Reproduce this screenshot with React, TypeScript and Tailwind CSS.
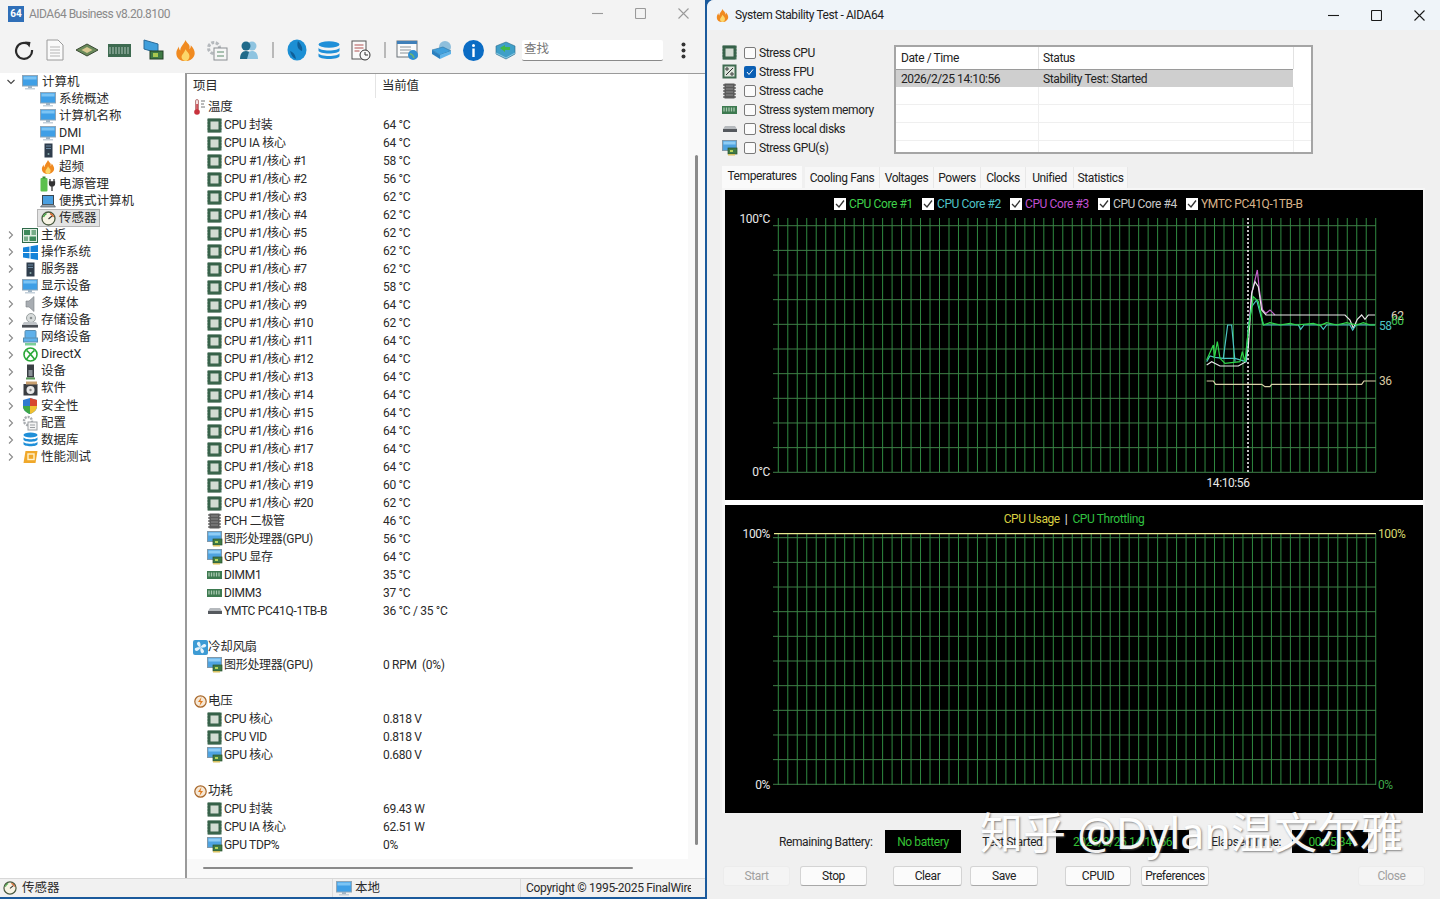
import React from "react";

const FONT = "font-['Roboto','Noto_Sans_CJK_SC',sans-serif]";

// ---- small icons ----
const Chip = () => (
    <svg width="15" height="15" viewBox="0 0 15 15" className="shrink-0">
        <rect x="0.500" y="0.500" width="14" height="14" fill="#3f6b50" />
        <path d="M2 0v15M4 0v15M6 0v15M8 0v15M10 0v15M12 0v15M0 2h15M0 5h15M0 8h15M0 11h15" stroke="#2f5540" strokeWidth="0.500" />
        <rect x="3.500" y="3.500" width="8" height="8" fill="#d3dcd3" />
    </svg>
);
const Monitor = ({ w = 16 }: { w?: number }) => (
    <svg width={w} height="15" viewBox="0 0 16 15" className="shrink-0">
        <rect x="0.500" y="0.500" width="15" height="10.500" fill="#3f9fe6" stroke="#8fa6b8" />
        <rect x="1.500" y="1.500" width="13" height="3" fill="#7cc4f4" />
        <rect x="6" y="11" width="4" height="2" fill="#9fb4c4" />
        <rect x="3" y="13" width="10" height="1.500" fill="#c4d0da" />
    </svg>
);
const Gpu = () => (
    <svg width="16" height="16" viewBox="0 0 16 16" className="shrink-0">
        <rect x="0.500" y="0.500" width="14" height="10" fill="#4fa3e0" stroke="#7f98aa" />
        <rect x="1.500" y="1.500" width="12" height="3" fill="#8fcdf5" />
        <rect x="6" y="8" width="9" height="6" fill="#3f7a45" stroke="#28502c" strokeWidth="0.700" />
        <rect x="8" y="10" width="3" height="2" fill="#b8d45a" />
        <rect x="6" y="14" width="7" height="1.500" fill="#d8c060" />
    </svg>
);
const Ram = () => (
    <svg width="15" height="8" viewBox="0 0 15 8" className="shrink-0">
        <rect width="15" height="8" fill="#3d7a50" />
        <path d="M2 1.500v4M4.500 1.500v4M7 1.500v4M9.500 1.500v4M12 1.500v4" stroke="#a8c8b0" strokeWidth="1.300" />
    </svg>
);
const Disk = () => (
    <svg width="14" height="6" viewBox="0 0 14 6" className="shrink-0">
        <path d="M2 0h10l2 3v3H0V3z" fill="#b5b9bd" />
        <rect y="3" width="14" height="3" fill="#55595e" />
    </svg>
);
const Cache = () => (
    <svg width="13" height="16" viewBox="0 0 13 16" className="shrink-0">
        <rect x="1.500" y="0.500" width="10" height="15" fill="#5a5a5a" />
        <path d="M0 2h13M0 5h13M0 8h13M0 11h13M0 14h13" stroke="#2d2d2d" strokeWidth="1.200" strokeDasharray="2 9" />
        <path d="M3 3h7M3 6h7M3 9h7M3 12h7" stroke="#8d8d8d" />
    </svg>
);
const Fpu = () => (
    <svg width="15" height="15" viewBox="0 0 15 15" className="shrink-0">
        <rect x="0.500" y="0.500" width="14" height="14" fill="#3f6b50" />
        <rect x="2.500" y="2.500" width="10" height="10" fill="#dde5dc" />
        <path d="M4 11l7-7" stroke="#2d2d2d" />
        <circle cx="5" cy="5" r="1.200" fill="none" stroke="#2d2d2d" />
        <circle cx="10" cy="10" r="1.200" fill="none" stroke="#2d2d2d" />
    </svg>
);
const Flame = ({ s = 14 }: { s?: number }) => (
    <svg width={s} height={s} viewBox="0 0 16 16" className="shrink-0">
        <path d="M8 0c1 3 4 3 3 7 1-1 1-2 1-3 2 2 3 4 3 6 0 3-3 6-7 6s-7-2-7-6c0-2 1-3 2-5 0 1 0 2 1 3 0-3 3-5 4-8z" fill="#f08a20" />
        <path d="M8 7c1 2 3 3 3 5s-1 4-3 4-3-2-3-3c0-2 2-3 3-6z" fill="#fcd66a" />
    </svg>
);
const Thermo = () => (
    <svg width="14" height="16" viewBox="0 0 14 16" className="shrink-0">
        <rect x="2.500" y="0.500" width="3" height="11" rx="1.500" fill="#f4dede" stroke="#a05050" strokeWidth="0.700" />
        <rect x="3.300" y="5" width="1.500" height="7" fill="#c8323c" />
        <circle cx="4" cy="13" r="2.800" fill="#c8323c" />
        <path d="M8 2h4M8 5h3M8 8h4" stroke="#777" />
    </svg>
);
const Bolt = () => (
    <svg width="13" height="13" viewBox="0 0 13 13" className="shrink-0">
        <circle cx="6.500" cy="6.500" r="5.700" fill="#f6e8d6" stroke="#a8672a" strokeWidth="1.200" />
        <path d="M7.500 2L4 7h2.500L5.500 11 9 6H6.500z" fill="#e07a1c" />
    </svg>
);
const Fan = () => (
    <svg width="15" height="15" viewBox="0 0 15 15" className="shrink-0">
        <rect width="15" height="15" rx="2" fill="#3d9bd4" />
        <path d="M7.500 7.500C4 6 3 3 5 2s3 2 2.500 5.500zM7.500 7.500C9 4 12 3 13 5s-2 3-5.500 2.500zM7.500 7.500C11 9 12 12 10 13s-3-2-2.500-5.500zM7.500 7.500C6 11 3 12 2 10s2-3 5.500-2.500z" fill="#e6f3fb" />
    </svg>
);
const Gauge = ({ s = 15 }: { s?: number }) => (
    <svg width={s} height={s} viewBox="0 0 15 15" className="shrink-0">
        <circle cx="7.500" cy="7.500" r="6.500" fill="#f8f4e4" stroke="#4a5a40" strokeWidth="1.300" />
        <path d="M2.500 6a5.500 5.500 0 0 1 3-3.300" stroke="#46a846" strokeWidth="1.400" fill="none" />
        <path d="M9 2.500a5.500 5.500 0 0 1 3.500 3.500" stroke="#d8642a" strokeWidth="1.400" fill="none" />
        <path d="M7.500 8L11 5" stroke="#333" strokeWidth="1.100" />
    </svg>
);

const TreeIcon = ({ k }: { k: string }) => {
    switch (k) {
        case "monitor": return <Monitor />;
        case "server":
            return (
                <svg width="15" height="15" viewBox="0 0 15 15" className="shrink-0">
                    <rect x="3.500" y="0.500" width="8" height="14" fill="#2f3d4c" />
                    <path d="M5 3h5M5 5.500h5" stroke="#6a8aa4" />
                    <circle cx="7.500" cy="11" r="1" fill="#8aa" />
                </svg>
            );
        case "flame": return <Flame />;
        case "power":
            return (
                <svg width="16" height="16" viewBox="0 0 16 16" className="shrink-0">
                    <rect x="0.500" y="2" width="7" height="13.500" rx="1" fill="#5cc04e" />
                    <rect x="2.500" y="0.500" width="3" height="2" fill="#3b8a34" />
                    <path d="M12 15V9M10 3v3M14 3v3M9.500 6h5v1.500a2.500 2.500 0 0 1-5 0z" stroke="#333" strokeWidth="1.300" fill="#333" />
                </svg>
            );
        case "laptop":
            return (
                <svg width="16" height="15" viewBox="0 0 16 15" className="shrink-0">
                    <rect x="2.500" y="1.500" width="11" height="9" fill="#4a9fe0" stroke="#3a4650" />
                    <path d="M0.500 13l2-2.500h11l2 2.500z" fill="#9aa4ac" stroke="#3a4650" strokeWidth="0.600" />
                </svg>
            );
        case "gauge": return <Gauge />;
        case "board":
            return (
                <svg width="16" height="15" viewBox="0 0 16 15" className="shrink-0">
                    <rect x="0.500" y="0.500" width="15" height="14" fill="#dfeee2" stroke="#2f6a4a" />
                    <rect x="2" y="2" width="6" height="5" fill="#3d8a5a" />
                    <rect x="9.500" y="2" width="4.500" height="5" fill="#76ad88" />
                    <rect x="2" y="8.500" width="4" height="4.500" fill="#76ad88" />
                    <rect x="7.500" y="8.500" width="6.500" height="4.500" fill="#3d8a5a" />
                </svg>
            );
        case "windows":
            return (
                <svg width="15" height="15" viewBox="0 0 15 15" className="shrink-0">
                    <path d="M0 2.500l6.500-1v5.500H0zM7.500 1.300L15 0v7H7.500zM0 8h6.500v5.500L0 12.500zM7.500 8H15v7l-7.500-1.300z" fill="#1583d8" />
                </svg>
            );
        case "speaker":
            return (
                <svg width="15" height="16" viewBox="0 0 15 16" className="shrink-0">
                    <path d="M3 5h3l5-4.500v15L6 11H3z" fill="#a8adb2" stroke="#7a7f84" strokeWidth="0.600" />
                </svg>
            );
        case "storage":
            return (
                <svg width="16" height="15" viewBox="0 0 16 15" className="shrink-0">
                    <circle cx="9" cy="5" r="4.500" fill="#d8dcdc" stroke="#9aa0a0" />
                    <circle cx="9" cy="5" r="1.300" fill="#8a9090" />
                    <path d="M2 9h12l2 3v2.500H0V12z" fill="#c0c4c8" />
                    <rect y="12" width="16" height="2.500" fill="#4a4e54" />
                </svg>
            );
        case "network":
            return (
                <svg width="15" height="16" viewBox="0 0 15 16" className="shrink-0">
                    <rect x="2" y="0.500" width="11" height="9" rx="1" fill="#5fb0ea" stroke="#5a8db0" />
                    <rect x="0.500" y="8" width="14" height="4" fill="#5fb0ea" stroke="#5a8db0" />
                    <rect x="2" y="13" width="11" height="2.500" fill="#7ccf9a" />
                </svg>
            );
        case "xbox":
            return (
                <svg width="15" height="15" viewBox="0 0 15 15" className="shrink-0">
                    <circle cx="7.500" cy="7.500" r="6.500" fill="#fff" stroke="#2aa838" strokeWidth="1.600" />
                    <path d="M3.500 3.500C6 5 9 9 11.500 12M11.500 3.500C9 5 6 9 3.500 12" stroke="#2aa838" strokeWidth="1.600" fill="none" />
                </svg>
            );
        case "device":
            return (
                <svg width="15" height="16" viewBox="0 0 15 16" className="shrink-0">
                    <rect x="4" y="0.500" width="7" height="13" fill="#3a3f44" />
                    <rect x="5.500" y="6" width="4" height="6" fill="#8a9096" />
                    <rect x="3" y="13.500" width="9" height="2" fill="#5a9a5a" />
                </svg>
            );
        case "software":
            return (
                <svg width="15" height="15" viewBox="0 0 15 15" className="shrink-0">
                    <rect x="0.500" y="3" width="14" height="11.500" fill="#3a3d42" />
                    <rect x="3" y="0.500" width="11" height="3" fill="#c9a070" />
                    <circle cx="7.500" cy="9" r="4" fill="#e8e8e8" />
                    <circle cx="7.500" cy="9" r="1.200" fill="#888" />
                </svg>
            );
        case "shield":
            return (
                <svg width="14" height="16" viewBox="0 0 14 16" className="shrink-0">
                    <path d="M7 0L14 2v6c0 4-3 6.500-7 8-4-1.500-7-4-7-8V2z" fill="#2f7ad0" />
                    <path d="M7 0L14 2v6H7z" fill="#d8462e" />
                    <path d="M7 8h7c0 4-3 6.500-7 8z" fill="#f0c030" />
                    <path d="M0 8h7v8c-4-1.500-7-4-7-8z" fill="#3fa845" />
                </svg>
            );
        case "config":
            return (
                <svg width="16" height="16" viewBox="0 0 16 16" className="shrink-0">
                    <circle cx="6" cy="6" r="4" fill="none" stroke="#a8acb0" strokeWidth="2.400" strokeDasharray="2 1" />
                    <rect x="6" y="7" width="9" height="8" fill="#f4f4f4" stroke="#9a9ea2" />
                    <path d="M8 10h5M8 12.500h5" stroke="#9a9ea2" />
                </svg>
            );
        case "db":
            return (
                <svg width="15" height="15" viewBox="0 0 15 15" className="shrink-0">
                    <ellipse cx="7.500" cy="3" rx="7" ry="2.500" fill="#1f8fd8" />
                    <path d="M0.500 5c0 3 14 3 14 0v2.500c0 3-14 3-14 0zM0.500 9.500c0 3 14 3 14 0V12c0 3-14 3-14 0z" fill="#1f8fd8" />
                </svg>
            );
        case "bench":
            return (
                <svg width="15" height="14" viewBox="0 0 15 14" className="shrink-0">
                    <path d="M2.500 1h12l-2 12H.500z" fill="#f0a82a" />
                    <rect x="5" y="4" width="6" height="5.500" fill="none" stroke="#fff2cc" strokeWidth="1.400" />
                </svg>
            );
        default: return <Monitor />;
    }
};

const ListIcon = ({ k }: { k: string }) => {
    if (k === "chip") return <Chip />;
    if (k === "gpu") return <Gpu />;
    if (k === "cache") return <Cache />;
    if (k === "ram") return <Ram />;
    if (k === "disk") return <Disk />;
    return null;
};

const Chevron = ({ open }: { open?: boolean }) => (
    <svg width="8" height="8" viewBox="0 0 8 8" className="shrink-0">
        <path d={open ? "M0.500 2L4 5.500 7.500 2" : "M2 0.500L5.500 4 2 7.500"} fill="none" stroke={open ? "#444" : "#8a8a8a"} strokeWidth="1.100" />
    </svg>
);

// ---- toolbar ----
const ToolIcon = ({ k }: { k: string }) => {
    switch (k) {
        case "refresh":
            return (
                <svg width="20" height="20" viewBox="0 0 20 20">
                    <path d="M14.500 4.200A8 8 0 1 0 18 10" fill="none" stroke="#2a2a2a" strokeWidth="2.200" />
                    <path d="M11 1.500l5.500 0.500-1 5.500z" fill="#2a2a2a" />
                </svg>
            );
        case "doc":
            return (
                <svg width="18" height="22" viewBox="0 0 18 22">
                    <path d="M1 1h11l5 5v15H1z" fill="#fafafa" stroke="#9a9a9a" />
                    <path d="M4 8h10M4 11h10M4 14h10M4 17h10" stroke="#b5b5b5" />
                </svg>
            );
        case "chip":
            return (
                <svg width="24" height="14" viewBox="0 0 24 14">
                    <path d="M12 1l11 6-11 6L1 7z" fill="#6a8a5a" stroke="#3a4a34" />
                    <path d="M12 4l5.500 3L12 10 6.500 7z" fill="#d8c890" />
                </svg>
            );
        case "ram":
            return (
                <svg width="23" height="13" viewBox="0 0 23 13">
                    <rect width="23" height="13" fill="#3d6a50" />
                    <path d="M2 3v7M5 3v7M8 3v7M11 3v7M14 3v7M17 3v7M20 3v7" stroke="#8aa898" strokeWidth="1.500" />
                </svg>
            );
        case "gpu":
            return (
                <svg width="21" height="22" viewBox="0 0 21 22">
                    <path d="M1 1l14 4v9L1 10z" fill="#3f9fdc" stroke="#2a6a98" />
                    <rect x="7" y="12" width="13" height="8" fill="#3f7a45" stroke="#223f25" />
                    <rect x="10" y="14" width="5" height="4" fill="#a8c850" />
                </svg>
            );
        case "flame": return <Flame s={21} />;
        case "gear":
            return (
                <svg width="22" height="21" viewBox="0 0 22 21">
                    <circle cx="8" cy="8" r="5.500" fill="none" stroke="#b5b9bd" strokeWidth="3" strokeDasharray="3 1.500" />
                    <rect x="8" y="8" width="13" height="12" fill="#f6f6f6" stroke="#8a8e92" />
                    <path d="M11 12h7M11 16h7" stroke="#5a8a6a" />
                </svg>
            );
        case "users":
            return (
                <svg width="20" height="20" viewBox="0 0 20 20">
                    <circle cx="13" cy="6" r="4.500" fill="#8fc4e0" />
                    <path d="M6 19c0-5 3-8 7-8s6 3 6 8z" fill="#8fc4e0" />
                    <circle cx="7" cy="6" r="4.500" fill="#1f6a8a" />
                    <path d="M1 19c0-5 2-8 6-8 2 0 3 1 3 1l-2 7z" fill="#1f6a8a" />
                </svg>
            );
        case "globe":
            return (
                <svg width="20" height="22" viewBox="0 0 20 22">
                    <ellipse cx="10" cy="11" rx="9.500" ry="10.500" fill="#1c8fd4" />
                    <path d="M11 2c3 3 5 7 4 10-3-1-6-4-4-10zM3 12c3 1 5 3 6 8-3-1-5-4-6-8z" fill="#0f5f98" />
                </svg>
            );
        case "db":
            return (
                <svg width="22" height="19" viewBox="0 0 22 19">
                    <ellipse cx="11" cy="3.500" rx="10.500" ry="3.300" fill="#1f8fd8" />
                    <path d="M0.500 6.500c0 4 21 4 21 0v3c0 4-21 4-21 0zM0.500 12c0 4 21 4 21 0v3c0 4-21 4-21 0z" fill="#1f8fd8" />
                </svg>
            );
        case "report":
            return (
                <svg width="20" height="21" viewBox="0 0 20 21">
                    <rect x="1" y="1" width="14" height="18" fill="#fafafa" stroke="#555" />
                    <path d="M3.500 5h9M3.500 8h9M3.500 11h5" stroke="#b05050" />
                    <circle cx="14" cy="15" r="5" fill="#fafafa" stroke="#333" />
                    <path d="M14 12v3h3" stroke="#333" fill="none" />
                </svg>
            );
        case "window":
            return (
                <svg width="23" height="21" viewBox="0 0 23 21">
                    <rect x="1" y="1" width="20" height="16" fill="#fafafa" stroke="#6a7278" />
                    <rect x="1" y="1" width="20" height="3" fill="#3f7fb8" />
                    <path d="M4 7h11M4 10h11M4 13h9" stroke="#8a9298" />
                    <circle cx="17" cy="15" r="5" fill="#2f8fd0" />
                    <path d="M14 14c2 0 3 1 4 4" stroke="#70b86a" strokeWidth="1.500" fill="none" />
                </svg>
            );
        case "net":
            return (
                <svg width="21" height="21" viewBox="0 0 21 21">
                    <circle cx="14" cy="7" r="6" fill="#8fbfdc" />
                    <path d="M1 10l11-3 8 4-11 4z" fill="#3f9fdc" stroke="#2a70a0" strokeWidth="0.600" />
                    <path d="M1 10l8 5v4l-8-5z" fill="#2a80c0" />
                    <path d="M9 15l11-4v3l-11 5z" fill="#5fb4ea" />
                </svg>
            );
        case "info":
            return (
                <svg width="21" height="21" viewBox="0 0 21 21">
                    <circle cx="10.500" cy="10.500" r="10.500" fill="#0b6cc4" />
                    <rect x="9.300" y="8.500" width="2.400" height="8.500" fill="#fff" />
                    <circle cx="10.500" cy="5.500" r="1.500" fill="#fff" />
                </svg>
            );
        case "netgreen":
            return (
                <svg width="21" height="20" viewBox="0 0 21 20">
                    <path d="M1 6l10-4 9 4v8l-9 5-10-5z" fill="#3f9fc8" stroke="#2a6a8a" strokeWidth="0.600" />
                    <path d="M5 8l5-3v2h5v3h-5v2z" fill="#3fb848" />
                    <path d="M1 13l10 5 9-5" stroke="#8fc8e0" fill="none" />
                </svg>
            );
        default: return null;
    }
};

const Sep = () => <div className="h-[16px] w-[2px] bg-[#b9b9b9] mx-[7px]" />;

const tree: [string, string, boolean][] = [
    ["monitor", "系统概述", true],
    ["monitor", "计算机名称", true],
    ["monitor", "DMI", true],
    ["server", "IPMI", true],
    ["flame", "超频", true],
    ["power", "电源管理", true],
    ["laptop", "便携式计算机", true],
    ["gauge", "传感器", true],
    ["board", "主板", false],
    ["windows", "操作系统", false],
    ["server", "服务器", false],
    ["monitor", "显示设备", false],
    ["speaker", "多媒体", false],
    ["storage", "存储设备", false],
    ["network", "网络设备", false],
    ["xbox", "DirectX", false],
    ["device", "设备", false],
    ["software", "软件", false],
    ["shield", "安全性", false],
    ["config", "配置", false],
    ["db", "数据库", false],
    ["bench", "性能测试", false],
];

const coreTemps = [58, 56, 62, 62, 62, 62, 62, 58, 64, 62, 64, 64, 64, 64, 64, 64, 64, 64, 60, 62];

type Row =
    | { t: "blank" }
    | { t: "head"; icon: React.ReactNode; label: string }
    | { t: "item"; icon: string; label: string; value: string };

const rows: Row[] = [
    { t: "head", icon: <Thermo />, label: "温度" },
    { t: "item", icon: "chip", label: "CPU 封装", value: "64 °C" },
    { t: "item", icon: "chip", label: "CPU IA 核心", value: "64 °C" },
    ...coreTemps.map((v, i): Row => ({ t: "item", icon: "chip", label: `CPU #1/核心 #${i + 1}`, value: `${v} °C` })),
    { t: "item", icon: "cache", label: "PCH 二极管", value: "46 °C" },
    { t: "item", icon: "gpu", label: "图形处理器(GPU)", value: "56 °C" },
    { t: "item", icon: "gpu", label: "GPU 显存", value: "64 °C" },
    { t: "item", icon: "ram", label: "DIMM1", value: "35 °C" },
    { t: "item", icon: "ram", label: "DIMM3", value: "37 °C" },
    { t: "item", icon: "disk", label: "YMTC PC41Q-1TB-B", value: "36 °C / 35 °C" },
    { t: "blank" },
    { t: "head", icon: <Fan />, label: "冷却风扇" },
    { t: "item", icon: "gpu", label: "图形处理器(GPU)", value: "0 RPM  (0%)" },
    { t: "blank" },
    { t: "head", icon: <Bolt />, label: "电压" },
    { t: "item", icon: "chip", label: "CPU 核心", value: "0.818 V" },
    { t: "item", icon: "chip", label: "CPU VID", value: "0.818 V" },
    { t: "item", icon: "gpu", label: "GPU 核心", value: "0.680 V" },
    { t: "blank" },
    { t: "head", icon: <Bolt />, label: "功耗" },
    { t: "item", icon: "chip", label: "CPU 封装", value: "69.43 W" },
    { t: "item", icon: "chip", label: "CPU IA 核心", value: "62.51 W" },
    { t: "item", icon: "gpu", label: "GPU TDP%", value: "0%" },
];

const WinControls = ({ color, gaps }: { color: string; gaps: string }) => (
    <div className={`flex items-center ${gaps}`}>
        <svg width="11" height="11" viewBox="0 0 11 11"><path d="M0 5.500h11" stroke={color} strokeWidth="1.100" /></svg>
        <svg width="11" height="11" viewBox="0 0 11 11"><rect x="0.500" y="0.500" width="10" height="10" rx="1" fill="none" stroke={color} strokeWidth="1.100" /></svg>
        <svg width="11" height="11" viewBox="0 0 11 11"><path d="M0.500 0.500l10 10M10.500 0.500l-10 10" stroke={color} strokeWidth="1.100" /></svg>
    </div>
);

function MainWindow() {
    return (
        <div className="w-[705px] h-[897px] flex flex-col bg-[#f3f3f3] text-[#2a2a2a]">
            <div className="h-[27px] flex items-center shrink-0 pl-[8px] pr-[16px]">
                <div className="w-[16px] h-[16px] bg-[#2f6fb8] text-white text-[10px] font-bold flex items-center justify-center leading-none">64</div>
                <span className="ml-[5px] text-[12px] tracking-[-0.5px] text-[#8a8a8a]">AIDA64 Business v8.20.8100</span>
                <div className="ml-auto">
                    <WinControls color="#9a9a9a" gaps="gap-[32px]" />
                </div>
            </div>
            <div className="h-[46px] flex items-center shrink-0 pl-[13px]">
                <div className="w-[22px] mr-[4px] flex justify-center"><ToolIcon k="refresh" /></div>
                {["doc", "chip", "ram"].map((k) => (
                    <div key={k} className="w-[32px] flex justify-center"><ToolIcon k={k} /></div>
                ))}
                <div className="w-[2px]" />
                {["gpu", "flame", "gear", "users"].map((k) => (
                    <div key={k} className="w-[32px] flex justify-center"><ToolIcon k={k} /></div>
                ))}
                <Sep />
                {["globe", "db", "report"].map((k) => (
                    <div key={k} className="w-[32px] flex justify-center"><ToolIcon k={k} /></div>
                ))}
                <Sep />
                <div className="w-[32px] -ml-[2px] mr-[2px] flex justify-center"><ToolIcon k="window" /></div>
                {["net", "info", "netgreen"].map((k) => (
                    <div key={k} className="w-[32px] flex justify-center"><ToolIcon k={k} /></div>
                ))}
                <div className="ml-[1px] w-[141px] h-[21px] bg-white border-b border-[#8a8a8a] rounded-[2px] text-[12.500px] text-[#777] px-[2px] leading-[17px]">查找</div>
                <svg width="5" height="17" viewBox="0 0 5 17" className="ml-[18px]">
                    <circle cx="2.500" cy="2.500" r="2" fill="#333" /><circle cx="2.500" cy="8.500" r="2" fill="#333" /><circle cx="2.500" cy="14.500" r="2" fill="#333" />
                </svg>
            </div>
            <div className="flex-1 min-h-0 flex">
                <div className="w-[185px] bg-white shrink-0 text-[12.500px] pl-[7px] pt-[1px]">
                    <div className="h-[16.500px] flex items-center">
                        <Chevron open />
                        <span className="ml-[7px]"><Monitor /></span>
                        <span className="ml-[4px]">计算机</span>
                    </div>
                    {tree.map(([icon, label, child]) => (
                        <div key={label} className={`h-[17.050px] flex items-center ${child ? "pl-[33px]" : ""}`}>
                            {!child && <Chevron />}
                            <div className={`${child ? "" : "ml-[7px]"} flex items-center ${label === "传感器" ? "-ml-[2px] pl-[2px] pr-[2px] bg-[#e3e3e3] outline outline-[#b5b5b5] h-[16px]" : ""}`}>
                                <span className="w-[16px] flex justify-center"><TreeIcon k={icon} /></span>
                                <span className="ml-[3px] whitespace-nowrap">{label}</span>
                            </div>
                        </div>
                    ))}
                </div>
                <div className="flex-1 min-w-0 border-l-2 border-t border-[#9a9a9a] bg-white flex flex-col">
                    <div className="flex-1 min-h-0 flex">
                        <div className="flex-1 min-w-0 text-[12px] tracking-[-0.3px]">
                            <div className="h-[24px] flex items-center text-[12.500px]">
                                <div className="w-[189px] pl-[6px] border-r border-[#e4e4e4] h-full flex items-center">项目</div>
                                <div className="pl-[6px]">当前值</div>
                            </div>
                            {rows.map((r, i) => {
                                if (r.t === "blank") return <div key={i} className="h-[18px]" />;
                                if (r.t === "head") {
                                    return (
                                        <div key={i} className="h-[18px] flex items-center pl-[5px] text-[12.500px]">
                                            <span className="w-[16px] flex justify-center">{r.icon}</span>
                                            <span>{r.label}</span>
                                        </div>
                                    );
                                }
                                return (
                                    <div key={i} className="h-[18px] flex items-center">
                                        <div className="w-[196px] pl-[20px] flex items-center whitespace-nowrap">
                                            <span className="w-[15px] flex justify-center"><ListIcon k={r.icon} /></span>
                                            <span className="ml-[2px]">{r.label}</span>
                                        </div>
                                        <span className="whitespace-pre">{r.value}</span>
                                    </div>
                                );
                            })}
                        </div>
                        <div className="w-[17px] bg-[#f9f9f9] shrink-0 pt-[81px] pl-[7px] pb-[14px]">
                            <div className="w-[3px] h-full bg-[#8a8a8a] rounded-full" />
                        </div>
                    </div>
                    <div className="h-[19px] shrink-0 bg-[#f9f9f9] pl-[16px] pt-[8px]">
                        <div className="w-[430px] h-[2px] bg-[#8a8a8a] rounded-full" />
                    </div>
                </div>
            </div>
            <div className="h-[19px] shrink-0 border-t border-[#d8d8d8] flex items-center text-[12.500px] bg-[#f1f1f1]">
                <div className="w-[333px] pl-[3px] flex items-center h-full border-r border-[#dcdcdc]">
                    <Gauge s={14} />
                    <span className="ml-[5px]">传感器</span>
                </div>
                <div className="w-[188px] pl-[3px] flex items-center h-full border-r border-[#dcdcdc]">
                    <Monitor />
                    <span className="ml-[3px]">本地</span>
                </div>
                <div className="pl-[5px] w-[170px] overflow-hidden whitespace-nowrap text-[12px] tracking-[-0.3px]">Copyright © 1995-2025 FinalWire Ltd.</div>
            </div>
        </div>
    );
}

const CheckBox = ({ checked }: { checked?: boolean }) =>
    checked ? (
        <div className="w-[12px] h-[12px] rounded-[2px] bg-[#0a5fb4] flex items-center justify-center shrink-0">
            <svg width="8" height="8" viewBox="0 0 8 8"><path d="M1 4l2 2.500L7 1.500" fill="none" stroke="#fff" /></svg>
        </div>
    ) : (
        <div className="w-[12px] h-[12px] rounded-[2px] bg-[#fbfbfb] border border-[#7a7a7a] shrink-0" />
    );

const stress: [React.ReactNode, string, boolean][] = [
    [<Chip key="a" />, "Stress CPU", false],
    [<Fpu key="b" />, "Stress FPU", true],
    [<Cache key="c" />, "Stress cache", false],
    [<Ram key="d" />, "Stress system memory", false],
    [<Disk key="e" />, "Stress local disks", false],
    [<Gpu key="f" />, "Stress GPU(s)", false],
];

const tabs = [
    ["Cooling Fans", "w-[75px]"],
    ["Voltages", "w-[54px]"],
    ["Powers", "w-[47px]"],
    ["Clocks", "w-[45px]"],
    ["Unified", "w-[48px]"],
    ["Statistics", "w-[54px]"],
];

const legend = [
    ["CPU Core #1", "text-[#3fd04a]"],
    ["CPU Core #2", "text-[#4fc3c8]"],
    ["CPU Core #3", "text-[#c050d0]"],
    ["CPU Core #4", "text-[#c8c8c8]"],
    ["YMTC PC41Q-1TB-B", "text-[#d8b48a]"],
];

const vLines = Array.from({ length: 64 }, (_, i) => 778.3 + i * 9.483);

const Grid = ({ top, first, bottom }: { top: number; first: number; bottom: number }) => (
    <g>
        {vLines.map((x) => (
            <line key={x} x1={x} x2={x} y1={top} y2={bottom} stroke="#2f8a40" strokeWidth="1" />
        ))}
        {Array.from({ length: 11 }, (_, i) => first + i * 24.66).map((y) => (
            <line key={y} x1={773} x2={1376} y1={y} y2={y} stroke="#3f7f48" strokeWidth="1" />
        ))}
    </g>
);

// line traces, in coordinates of the chart's 3x detail
const traces: [string, string][] = [
    ["#d8d0a8", "80,453 100,453 107,463 245,463 255,470 270,470 275,463 545,463 552,453 587,453"],
    ["#c060c8", "205,310 215,190 225,150 232,120 238,180 248,240 258,250 270,240 285,255"],
    ["#e8e8e8", "80,405 95,395 120,408 175,408 198,395 205,350 215,190 225,155 235,170 245,240 258,255 495,255 510,270 520,295 532,268 545,255 555,268 565,255 585,255"],
    ["#4cc4c4", "80,395 90,378 105,382 130,385 165,385 198,395 205,290 215,230 230,210 250,285 355,285 362,298 372,285 420,285 430,298 440,285 510,285 518,300 528,285 585,285"],
    ["#2fd84a", "80,390 100,345 103,385 112,335 120,385 135,400 180,395 187,365 195,395 205,300 220,200 235,215 250,285 270,278 300,285 330,280 350,285 400,280 420,287 440,278 470,285 500,278 530,285 550,278 570,285 585,285"],
    ["#4cc4c4", "130,385 143,285 155,285 165,395"],
];

function UpperChart() {
    return (
        <svg width="698" height="288" viewBox="725 212 698 288" className="block">
            <Grid top={218} first={225.7} bottom={472} />
            <line x1={1248} x2={1248} y1={218} y2={472} stroke="#fff" strokeWidth="1.500" strokeDasharray="2 2" />
            <g transform="translate(1180 230) scale(0.3333)">
                {traces.map(([c, p]) => (
                    <polyline key={p} points={p} fill="none" stroke={c} strokeWidth="3.600" />
                ))}
            </g>
            <g fontSize="12" fontFamily="Roboto, sans-serif">
                <text x={770} y={223} textAnchor="end" fill="#e8e8e8">100°C</text>
                <text x={770} y={476} textAnchor="end" fill="#e8e8e8">0°C</text>
                <text x={1228} y={487} textAnchor="middle" fill="#e8e8e8">14:10:56</text>
                <text x={1391} y={320} fill="#e0d8c0">62</text>
                <text x={1391} y={325} fill="#3fc050">60</text>
                <text x={1379} y={330} fill="#4cc4c4">58</text>
                <text x={1379} y={385} fill="#d8c8a0">36</text>
            </g>
        </svg>
    );
}

function LowerChart() {
    return (
        <svg width="698" height="286" viewBox="725 527 698 286" className="block">
            <Grid top={534} first={537.7} bottom={785} />
            <line x1={774} x2={1376} y1={533.7} y2={533.7} stroke="#e8e890" strokeWidth="1.200" />
            <g fontSize="12" fontFamily="Roboto, sans-serif">
                <text x={770} y={538} textAnchor="end" fill="#e8e8e8">100%</text>
                <text x={770} y={789} textAnchor="end" fill="#e8e8e8">0%</text>
                <text x={1378} y={538} fill="#d8d870">100%</text>
                <text x={1378} y={789} fill="#3fa84a">0%</text>
            </g>
        </svg>
    );
}

const Btn = ({ label, w, ml, off }: { label: string; w: string; ml: string; off?: boolean }) => (
    <div className={`${w} ${ml} h-[20px] rounded-[3px] flex items-center justify-center text-[12px] ${off ? "bg-[#f4f4f4] text-[#a0a0a0] border border-[#ececec]" : "bg-[#fbfbfb] text-[#222] border border-[#d4d4d4] border-b-[#a8a8a8]"}`}>
        {label}
    </div>
);

const Readout = ({ w, text }: { w: string; text: string }) => (
    <div className={`${w} h-[23px] bg-black text-[#35c235] text-[12px] flex items-center justify-center shrink-0`}>{text}</div>
);

function StabilityWindow() {
    return (
        <div className="relative flex-1 h-full bg-[#f0f0f0] rounded-tl-[7px] text-[#222] text-[12px] tracking-[-0.4px] flex flex-col">
            <div className="h-[30px] shrink-0 bg-[#eff4f9] rounded-tl-[7px] flex items-center pl-[9px] pr-[15px]">
                <Flame s={13} />
                <span className="ml-[6px]">System Stability Test - AIDA64</span>
                <div className="ml-auto">
                    <WinControls color="#1a1a1a" gaps="gap-[32px]" />
                </div>
            </div>
            <div className="h-[136px] shrink-0 flex pl-[15px] pt-[13px]">
                <div className="w-[172px]">
                    {stress.map(([ic, label, on]) => (
                        <div key={label} className="h-[19px] flex items-center">
                            <span className="w-[15px] flex justify-center">{ic}</span>
                            <span className="ml-[7px]"><CheckBox checked={on} /></span>
                            <span className="ml-[3px] whitespace-nowrap">{label}</span>
                        </div>
                    ))}
                </div>
                <div className="w-[419px] h-[109px] mt-[2px] bg-white border-2 border-[#a5a5a5] flex flex-col">
                    <div className="h-[22px] flex items-center shrink-0">
                        <div className="w-[143px] pl-[5px] h-full flex items-center border-r border-[#e2e2e2]">Date / Time</div>
                        <div className="w-[255px] pl-[4px] h-full flex items-center border-r border-[#e2e2e2]">Status</div>
                    </div>
                    <div className="h-[18px] w-[397px] flex items-center bg-[#cfcfcf] border-t border-[#9a9a9a] shrink-0">
                        <div className="w-[143px] pl-[5px]">2026/2/25 14:10:56</div>
                        <div className="pl-[4px]">Stability Test: Started</div>
                    </div>
                    {[0, 1, 2, 3].map((i) => (
                        <div key={i} className="h-[18px] flex border-b border-[#efefef] shrink-0 last:border-b-0 last:h-[11px]">
                            <div className="w-[143px] border-r border-[#efefef]" />
                            <div className="w-[255px] border-r border-[#efefef]" />
                        </div>
                    ))}
                </div>
            </div>
            <div className="h-[22px] shrink-0 flex items-end pl-[15px]">
                <div className="w-[80px] h-[22px] bg-[#fafafa] flex items-center justify-center pb-[2px]">Temperatures</div>
                <div className="w-[3px]" />
                {tabs.map(([label, w]) => (
                    <div key={label} className={`${w} h-[21px] bg-[#f7f7f7] border-r border-[#e8e8e8] flex items-center justify-center whitespace-nowrap`}>{label}</div>
                ))}
            </div>
            <div className="ml-[15px] mr-[15px] pl-[3px] bg-[#f6f6f6] pt-[2px] shrink-0">
                <div className="w-[698px] h-[310px] bg-black flex flex-col">
                    <div className="h-[22px] pt-[5px] flex items-center pl-[109px] shrink-0">
                        {legend.map(([label, c]) => (
                            <div key={label} className={`w-[88px] flex items-center whitespace-nowrap ${c}`}>
                                <div className="w-[12px] h-[12px] bg-white flex items-center justify-center shrink-0">
                                    <svg width="10" height="10" viewBox="0 0 10 10"><path d="M1 5l3 3 5-6.500" fill="none" stroke="#333" strokeWidth="1.300" /></svg>
                                </div>
                                <span className="ml-[3px]">{label}</span>
                            </div>
                        ))}
                    </div>
                    <UpperChart />
                </div>
                <div className="w-[698px] h-[5px] bg-white" />
                <div className="w-[698px] h-[308px] bg-black flex flex-col">
                    <div className="h-[22px] pt-[5px] flex items-center justify-center shrink-0">
                        <span className="text-[#d8d040]">CPU Usage</span>
                        <span className="text-[#e8e8e8] mx-[5px]">|</span>
                        <span className="text-[#30c040]">CPU Throttling</span>
                    </div>
                    <LowerChart />
                </div>
            </div>
            <div className="h-[41px] shrink-0 flex items-center pl-[72px] pt-[16px] whitespace-nowrap">
                <span className="w-[106px]">Remaining Battery:</span>
                <Readout w="w-[76px]" text="No battery" />
                <span className="w-[95px] pr-[11px] text-right">Test Started:</span>
                <Readout w="w-[133px]" text="2026/2/25 14:10:56" />
                <span className="w-[103px] pr-[11px] text-right">Elapsed Time:</span>
                <Readout w="w-[76px]" text="00:05:34" />
            </div>
            <div className="flex items-center pt-[12px] pl-[16px]">
                <Btn label="Start" w="w-[67px]" ml="ml-0" off />
                <Btn label="Stop" w="w-[67px]" ml="ml-[10px]" />
                <Btn label="Clear" w="w-[69px]" ml="ml-[26px]" />
                <Btn label="Save" w="w-[68px]" ml="ml-[8px]" />
                <Btn label="CPUID" w="w-[66px]" ml="ml-[27px]" />
                <Btn label="Preferences" w="w-[68px]" ml="ml-[10px]" />
                <Btn label="Close" w="w-[67px]" ml="ml-[149px]" off />
            </div>
            {/* site watermark over the lower right corner */}
            <div className="absolute left-[273px] top-[805px] text-[43px] tracking-normal leading-[56px] whitespace-nowrap text-white font-['Noto_Sans','Noto_Sans_CJK_SC',sans-serif] [text-shadow:1px_1px_2px_rgba(90,90,90,0.75)] opacity-95">
                知乎 @Dylan温文尔雅
            </div>
        </div>
    );
}

export default function App() {
    return (
        <div className={`w-[1440px] h-[899px] overflow-hidden flex bg-[#1b5a9c] ${FONT}`}>
            <MainWindow />
            <div className="w-[2px]" />
            <StabilityWindow />
        </div>
    );
}
